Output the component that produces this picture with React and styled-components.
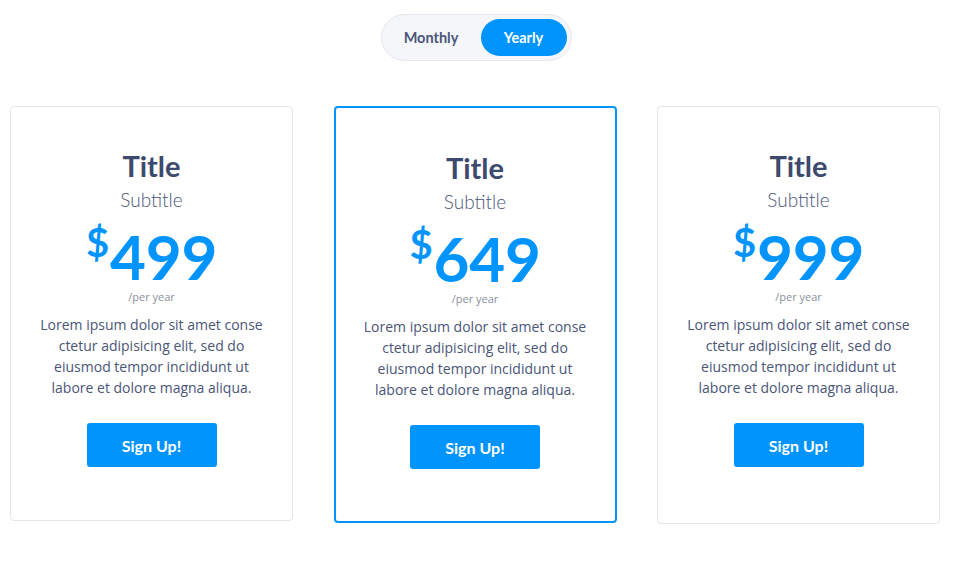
import React, { useState } from 'react'
import styled, { createGlobalStyle } from 'styled-components'

const GlobalStyle = createGlobalStyle`
  body {
    margin: 0;
    background: #ffffff;
    font-family: "Open Sans", "Liberation Sans", sans-serif;
  }
`

const Page = styled.div`
  padding-top: 14px;
`

const ToggleWrap = styled.div`
  display: flex;
  justify-content: center;
  padding-right: 1px;
`

const Toggle = styled.div`
  display: flex;
  align-items: center;
  gap: 4px;
  padding: 4px;
  height: 37px;
  background: #f5f6fa;
  border: 1px solid #e6e7ec;
  border-radius: 24px;
`

const ToggleButton = styled.button`
  height: 37px;
  padding: 0;
  width: ${(p) => (p.active ? '86px' : '91px')};
  border: none;
  border-radius: 19px;
  background: ${(p) => (p.active ? '#0094fc' : 'transparent')};
  color: ${(p) => (p.active ? '#ffffff' : '#4a5578')};
  font-family: "Lato", "Liberation Sans", sans-serif;
  font-weight: 700;
  font-size: 14.5px;
  cursor: pointer;
`

const Cards = styled.div`
  display: grid;
  grid-template-columns: repeat(3, 283px);
  column-gap: 40.5px;
  padding: 45px 0 0 10px;
  align-items: start;
`

const Card = styled.div`
  box-sizing: border-box;
  height: ${(p) => p.h}px;
  border: ${(p) => (p.featured ? '2px solid #0094fc' : '1px solid #e4e5e9')};
  border-radius: 4px;
  padding-top: ${(p) => (p.featured ? '42px' : '41px')};
  display: flex;
  flex-direction: column;
  align-items: center;
  text-align: center;
`

const Title = styled.h2`
  margin: 0;
  font-family: "Lato", "Liberation Sans", sans-serif;
  font-weight: 700;
  font-size: 29px;
  line-height: 36px;
  color: #3d4a6e;
`

const Subtitle = styled.div`
  margin-top: 4px;
  font-family: "Lato", "Liberation Sans", sans-serif;
  font-weight: 300;
  font-size: 19px;
  line-height: 24px;
  color: #4a5578;
`

const Price = styled.div`
  display: flex;
  align-items: flex-start;
  margin-top: 13px;
  color: #0094fc;
  font-family: "Lato", "Liberation Sans", sans-serif;
  font-weight: 700;
  line-height: 1;
`

const Currency = styled.span`
  font-size: 40px;
  line-height: 40px;
  margin-top: -3px;
  margin-right: 1px;
`

const Amount = styled.span`
  font-size: 62px;
  line-height: 62px;
  letter-spacing: -0.3px;
`

const Period = styled.div`
  margin-top: 3px;
  font-size: 11px;
  line-height: 13px;
  color: #8a90a0;
`

const Text = styled.p`
  margin: 11px 0 0;
  max-width: 232px;
  font-size: 14px;
  line-height: 21px;
  color: #4a5578;
`

const SignUp = styled.button`
  margin-top: 25px;
  width: 130px;
  height: 44px;
  border: none;
  border-radius: 3px;
  background: #0094fc;
  color: #ffffff;
  font-family: "Lato", "Liberation Sans", sans-serif;
  font-weight: 700;
  font-size: 16px;
  cursor: pointer;
`

const plans = [
  { price: 499, height: 415 },
  { price: 649, height: 417, featured: true },
  { price: 999, height: 418 },
]

export default function App() {
  const [period, setPeriod] = useState('yearly')

  return (
    <Page>
      <GlobalStyle />
      <ToggleWrap>
        <Toggle>
          <ToggleButton active={period === 'monthly'} onClick={() => setPeriod('monthly')}>
            Monthly
          </ToggleButton>
          <ToggleButton active={period === 'yearly'} onClick={() => setPeriod('yearly')}>
            Yearly
          </ToggleButton>
        </Toggle>
      </ToggleWrap>
      <Cards>
        {plans.map((plan) => (
          <Card key={plan.price} h={plan.height} featured={plan.featured}>
            <Title>Title</Title>
            <Subtitle>Subtitle</Subtitle>
            <Price>
              <Currency>$</Currency>
              <Amount>{plan.price}</Amount>
            </Price>
            <Period>/per year</Period>
            <Text>
              Lorem ipsum dolor sit amet conse ctetur adipisicing elit, sed do eiusmod tempor incididunt ut labore et dolore magna aliqua.
            </Text>
            <SignUp>Sign Up!</SignUp>
          </Card>
        ))}
      </Cards>
    </Page>
  )
}
